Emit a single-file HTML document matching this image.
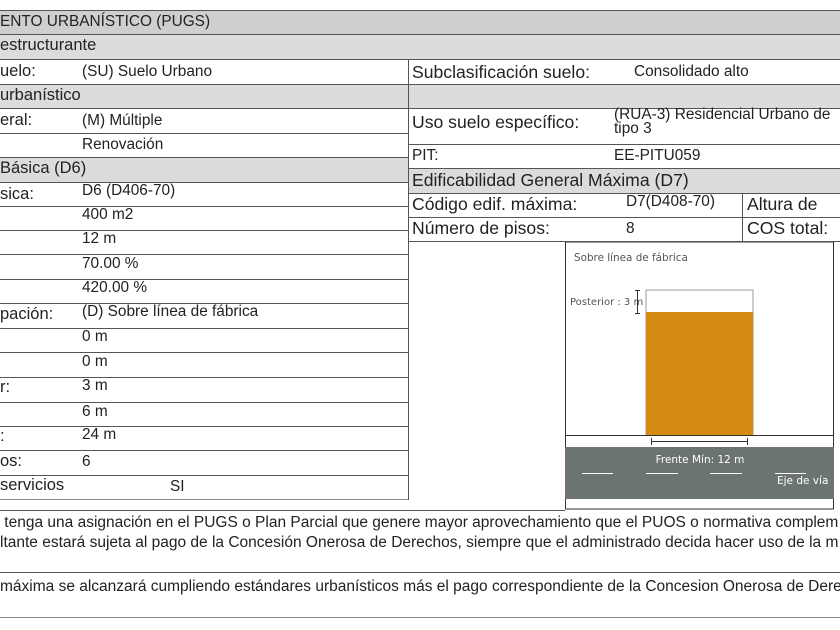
<!DOCTYPE html>
<html><head><meta charset="utf-8"><style>
body{margin:0;width:840px;height:630px;overflow:hidden;background:#fff;font-family:"Liberation Sans",sans-serif;color:#222;position:relative}
.a{position:absolute;white-space:nowrap}
.g{position:absolute;background:#dcdcdc}
.h{position:absolute;height:1px;background:#555}
.v{position:absolute;width:1px;background:#555}
.l{font-size:16.5px}
.r{font-size:17.6px}
.s{font-size:15.4px}
</style></head><body>
<div class="g" style="left:0;top:11px;width:840px;height:24px;background:#cfcfcf"></div>
<div class="g" style="left:0;top:35px;width:840px;height:24px"></div>
<div class="g" style="left:0;top:84px;width:840px;height:24px"></div>
<div class="g" style="left:0;top:157px;width:408px;height:25px"></div>
<div class="g" style="left:409px;top:169px;width:431px;height:24px"></div>
<div class="h" style="left:0;top:10px;width:840px"></div>
<div class="h" style="left:0;top:34px;width:840px"></div>
<div class="h" style="left:0;top:59px;width:840px"></div>
<div class="h" style="left:0;top:84px;width:840px"></div>
<div class="h" style="left:0;top:108px;width:840px"></div>
<div class="h" style="left:0;top:133px;width:408px"></div>
<div class="h" style="left:0;top:157px;width:408px"></div>
<div class="h" style="left:0;top:182px;width:408px"></div>
<div class="h" style="left:0;top:206px;width:408px"></div>
<div class="h" style="left:0;top:230px;width:408px"></div>
<div class="h" style="left:0;top:254px;width:408px"></div>
<div class="h" style="left:0;top:279px;width:408px"></div>
<div class="h" style="left:0;top:303px;width:408px"></div>
<div class="h" style="left:0;top:328px;width:408px"></div>
<div class="h" style="left:0;top:352px;width:408px"></div>
<div class="h" style="left:0;top:377px;width:408px"></div>
<div class="h" style="left:0;top:402px;width:408px"></div>
<div class="h" style="left:0;top:426px;width:408px"></div>
<div class="h" style="left:0;top:450px;width:408px"></div>
<div class="h" style="left:0;top:475px;width:408px"></div>
<div class="h" style="left:0;top:499px;width:408px;background:#888"></div>
<div class="v" style="left:408px;top:59px;height:441px"></div>
<div class="h" style="left:409px;top:144px;width:431px"></div>
<div class="h" style="left:409px;top:168px;width:431px"></div>
<div class="h" style="left:409px;top:193px;width:431px"></div>
<div class="h" style="left:409px;top:217px;width:431px"></div>
<div class="h" style="left:409px;top:241px;width:431px"></div>
<div class="v" style="left:742px;top:193px;height:48px"></div>
<div class="a" style="left:0;top:13px;font-size:15.4px">ENTO URBANÍSTICO (PUGS)</div>
<div class="a l" style="left:0;top:36px">estructurante</div>
<div class="a l" style="left:0;top:62px">uelo:</div><div class="a s" style="left:82px;top:63px">(SU) Suelo Urbano</div>
<div class="a l" style="left:0;top:86px">urbanístico</div>
<div class="a l" style="left:0;top:111px">eral:</div><div class="a s" style="left:82px;top:112px">(M) Múltiple</div>
<div class="a s" style="left:82px;top:136px">Renovación</div>
<div class="a l" style="left:0;top:159px">Básica (D6)</div>
<div class="a l" style="left:0;top:185px">sica:</div><div class="a s" style="left:82px;top:182px">D6 (D406-70)</div>
<div class="a s" style="left:82px;top:206px">400 m2</div>
<div class="a s" style="left:82px;top:230px">12 m</div>
<div class="a s" style="left:82px;top:255px">70.00 %</div>
<div class="a s" style="left:82px;top:279px">420.00 %</div>
<div class="a l" style="left:0;top:305px">pación:</div><div class="a s" style="left:82px;top:303px">(D) Sobre línea de fábrica</div>
<div class="a s" style="left:82px;top:328px">0 m</div>
<div class="a s" style="left:82px;top:353px">0 m</div>
<div class="a l" style="left:0;top:378px">r:</div><div class="a s" style="left:82px;top:377px">3 m</div>
<div class="a s" style="left:82px;top:403px">6 m</div>
<div class="a l" style="left:0;top:427px">:</div><div class="a s" style="left:82px;top:426px">24 m</div>
<div class="a l" style="left:0;top:452px">os:</div><div class="a s" style="left:82px;top:453px">6</div>
<div class="a l" style="left:0;top:476px">servicios</div><div class="a s" style="left:170px;top:478px">SI</div>
<div class="a r" style="left:412px;top:62px">Subclasificación suelo:</div><div class="a s" style="left:634px;top:63px">Consolidado alto</div>
<div class="a r" style="left:412px;top:112px">Uso suelo específico:</div>
<div class="a s" style="left:614px;top:108px;line-height:14px">(RUA-3) Residencial Urbano de<br>tipo 3</div>
<div class="a s" style="left:412px;top:147px">PIT:</div><div class="a s" style="left:614px;top:147px">EE-PITU059</div>
<div class="a r" style="left:412px;top:170px">Edificabilidad General Máxima (D7)</div>
<div class="a r" style="left:412px;top:194px">Código edif. máxima:</div><div class="a s" style="left:626px;top:193px">D7(D408-70)</div>
<div class="a r" style="left:747px;top:194px">Altura de</div>
<div class="a r" style="left:412px;top:218px">Número de pisos:</div><div class="a s" style="left:626px;top:220px">8</div>
<div class="a r" style="left:747px;top:218px">COS total:</div>
<svg class="a" style="left:565px;top:242px" width="270" height="268" viewBox="0 0 270 268">
<rect x="0.5" y="0" width="268" height="267" fill="#fff" stroke="#333"/>
<text x="9" y="19" font-family="DejaVu Sans" font-size="10.4" fill="#555">Sobre línea de fábrica</text>
<text x="5" y="63" font-family="DejaVu Sans" font-size="10" fill="#555">Posterior : 3 m</text>
<rect x="81" y="48" width="107" height="145" fill="#fff" stroke="#999"/>
<rect x="81" y="70" width="107" height="123" fill="#d78a16"/>
<path d="M70 48.5h5M72.5 48v23M70 71.5h5" stroke="#333" fill="none"/>
<line x1="0" y1="193.5" x2="269" y2="193.5" stroke="#333"/>
<path d="M86 199.5h97M86.5 196v7M182.5 196v7" stroke="#333" fill="none"/>
<rect x="0" y="205" width="269" height="52" fill="#6b7472"/>
<text x="135" y="221" text-anchor="middle" font-family="DejaVu Sans" font-size="10.5" fill="#fff">Frente Mín: 12 m</text>
<path d="M17 231.5h31M81 231.5h32M145 231.5h32M210 231.5h31" stroke="#fff"/>
<text x="212" y="242" font-family="DejaVu Sans" font-size="10.5" fill="#fff">Eje de vía</text>
</svg>
<div class="h" style="left:0;top:510px;width:565px"></div>
<div class="a" style="left:0;top:513px;font-size:15.5px;line-height:20px">&nbsp;tenga una asignación en el PUGS o Plan Parcial que genere mayor aprovechamiento que el PUOS o normativa complem<br>ltante estará sujeta al pago de la Concesión Onerosa de Derechos, siempre que el administrado decida hacer uso de la m</div>
<div class="h" style="left:0;top:572px;width:840px"></div>
<div class="a" style="left:0;top:578px;font-size:15.5px">máxima se alcanzará cumpliendo estándares urbanísticos más el pago correspondiente de la Concesion Onerosa de Dere</div>
<div class="h" style="left:0;top:617px;width:840px;background:#888"></div>
</body></html>
